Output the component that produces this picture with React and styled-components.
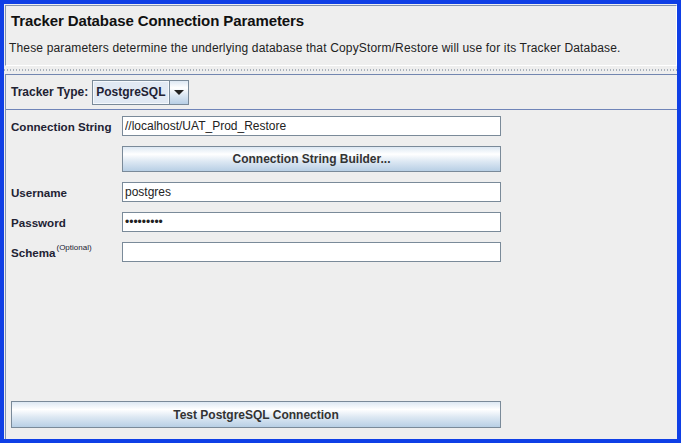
import React from "react";
import styled, { createGlobalStyle } from "styled-components";

const Global = createGlobalStyle`
  html, body { margin: 0; padding: 0; background: #eeeeee; }
  body { font-family: "Liberation Sans", Arial, sans-serif; color: #333333; }
  * { box-sizing: border-box; }
`;

const Frame = styled.div`
  width: 681px;
  height: 443px;
  border: 4px solid #0f3fe6;
  background: #eeeeee;
  display: flex;
  flex-direction: column;
  overflow: hidden;
`;

const Header = styled.div`
  height: 61px;
  margin: 1px 0 0 1px;
  border: 1px solid;
  border-color: #8092b0 #ffffff #ffffff #8092b0;
  padding: 6px 0 0 5px;
  display: flex;
  flex-direction: column;
`;

const Title = styled.div`
  font-size: 15px;
  font-weight: bold;
  color: #111111;
  line-height: 17px;
  letter-spacing: -0.1px;
`;

const Description = styled.div`
  font-size: 12px;
  line-height: 14px;
  color: #222222;
  letter-spacing: 0.16px;
  margin: 12px 0 0 -2px;
`;

const Separator = styled.div`
  height: 8px;
  display: flex;
  align-items: center;
  &::before {
    content: "";
    display: block;
    width: 100%;
    height: 2px;
    background-image: repeating-linear-gradient(
      90deg,
      #a9b1bb 0 1px,
      transparent 1px 3px
    );
  }
`;

const Panel = styled.div`
  flex: 1;
  margin-left: 1px;
  border-top: 1px solid #7286b0;
  border-left: 1px solid #8092b0;
  display: flex;
  flex-direction: column;
`;

const TypeRow = styled.div`
  height: 35px;
  border-bottom: 1px solid #6f84b8;
  display: flex;
  align-items: center;
  padding-left: 5px;
  gap: 4px;
`;

const Label = styled.span`
  font-size: ${(p) => p.$size || 11.6}px;
  font-weight: bold;
  color: #222233;
  white-space: nowrap;
`;

const Combo = styled.div`
  width: 97px;
  height: 25px;
  border: 1px solid #7a8a99;
  display: flex;
`;

const ComboValue = styled.div`
  flex: 1;
  background: #e1e9f3;
  box-shadow: inset 0 0 0 1px #f4f8fc;
  font-size: 12px;
  font-weight: bold;
  color: #222233;
  display: flex;
  align-items: center;
  padding-left: 3px;
`;

const ComboArrow = styled.div`
  width: 19px;
  border-left: 1px solid #7a8a99;
  background: linear-gradient(
    180deg,
    #dde8f3 0%,
    #ffffff 30%,
    #dde8f3 60%,
    #b8cfe5 100%
  );
  display: flex;
  align-items: center;
  justify-content: center;
`;

const Form = styled.div`
  flex: 1;
  padding: 6px 0 0 5px;
  display: grid;
  grid-template-columns: 111px 379px;
  grid-auto-rows: min-content;
  row-gap: 10px;
  align-items: center;
  align-content: start;
`;

const Field = styled.input`
  height: 20px;
  width: 100%;
  border: 1px solid #7a8a99;
  background: #ffffff;
  font-family: "Liberation Sans", Arial, sans-serif;
  font-size: 12px;
  color: #222222;
  padding: 0 2px;
  margin: 0;
  outline: none;
`;

const Sup = styled.sup`
  font-size: 8px;
  font-weight: normal;
  vertical-align: top;
  position: relative;
  top: -3px;
  margin-left: 1px;
`;

const Button = styled.button`
  height: ${(p) => p.$h}px;
  width: ${(p) => p.$w}px;
  margin: 0;
  padding: 0;
  border: 1px solid #7a8a99;
  background: linear-gradient(
    180deg,
    #dde8f3 0%,
    #ffffff 30%,
    #dde8f3 60%,
    #b8cfe5 100%
  );
  font-family: "Liberation Sans", Arial, sans-serif;
  font-size: 12px;
  font-weight: bold;
  color: #333333;
  cursor: pointer;
`;

const Footer = styled.div`
  padding: 0 0 11px 5px;
`;

const Spacer = styled.span``;

export default function App() {
  return (
    <>
      <Global />
      <Frame>
        <Header>
          <Title>Tracker Database Connection Parameters</Title>
          <Description>
            These parameters determine the underlying database that
            CopyStorm/Restore will use for its Tracker Database.
          </Description>
        </Header>
        <Separator />
        <Panel>
          <TypeRow>
            <Label $size={12}>Tracker Type:</Label>
            <Combo>
              <ComboValue>PostgreSQL</ComboValue>
              <ComboArrow>
                <svg width="10" height="5" viewBox="0 0 10 5">
                  <polygon points="0,0 10,0 5,5" fill="#222222" />
                </svg>
              </ComboArrow>
            </Combo>
          </TypeRow>
          <Form>
            <Label>Connection String</Label>
            <Field readOnly value="//localhost/UAT_Prod_Restore" />
            <Spacer />
            <Button $h={26} $w={379}>Connection String Builder...</Button>
            <Label>Username</Label>
            <Field readOnly value="postgres" />
            <Label>Password</Label>
            <Field readOnly value="•••••••••" />
            <Label>
              Schema<Sup>(Optional)</Sup>
            </Label>
            <Field readOnly value="" />
          </Form>
          <Footer>
            <Button $h={27} $w={490}>Test PostgreSQL Connection</Button>
          </Footer>
        </Panel>
      </Frame>
    </>
  );
}
